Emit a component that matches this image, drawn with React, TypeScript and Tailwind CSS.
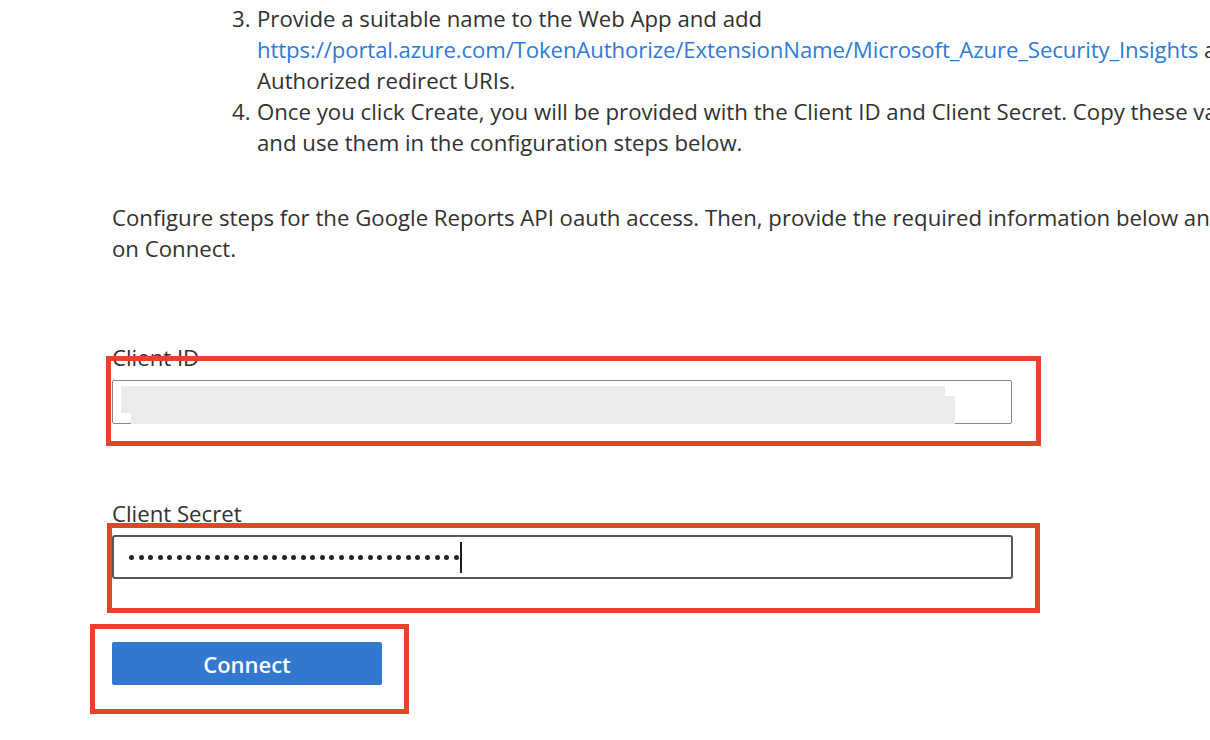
import React from "react";

const font = { fontFamily: '"Open Sans", "Noto Sans", sans-serif' };

function RedBox({ className }: { className: string }) {
  return <div className={"pointer-events-none absolute border-[5px] border-[#e6432a] " + className} />;
}

export default function App() {
  const dots = Array.from({ length: 35 });

  return (
    <div
      className="relative w-[1210px] h-[740px] overflow-hidden bg-white text-[22.2px] leading-[31px] text-[#323130]"
      style={font}
    >
      <div className="pl-[112px] w-[1500px]">
        {/* Steps list */}
        <div className="mt-[3px] pl-[120px] whitespace-nowrap">
          <div className="flex">
            <span className="w-[25px] shrink-0">3.</span>
            <div>
              <div>Provide a suitable name to the Web App and add</div>
              <div>
                <span className="text-[#2f7bd6] tracking-[-0.12px]">
                  https://portal.azure.com/TokenAuthorize/ExtensionName/Microsoft_Azure_Security_Insights
                </span>{" "}
                as the
              </div>
              <div>Authorized redirect URIs.</div>
            </div>
          </div>
          <div className="flex">
            <span className="w-[25px] shrink-0">4.</span>
            <div>
              <div>Once you click Create, you will be provided with the Client ID and Client Secret. Copy these values</div>
              <div>and use them in the configuration steps below.</div>
            </div>
          </div>
        </div>

        {/* Intro paragraph */}
        <div className="mt-[44px] whitespace-nowrap">
          <div>Configure steps for the Google Reports API oauth access. Then, provide the required information below and click</div>
          <div>on Connect.</div>
        </div>

        {/* Client ID */}
        <div className="mt-[78px]">Client ID</div>
        <div className="relative mt-[7px] w-[900px] h-[44px] rounded-[2px] border border-[#8a8886]">
          <div className="absolute left-[8px] top-[5px] w-[824px] h-[27px] bg-[#ebebeb]" />
          <div className="absolute left-[18px] top-[15px] w-[824px] h-[28px] bg-[#ebebeb]" />
          <RedBox className="-left-[7px] -top-[25px] w-[935px] h-[90px]" />
        </div>

        {/* Client Secret */}
        <div className="mt-[74px]">Client Secret</div>
        <div className="relative mt-[6px] w-[901px] h-[44px] rounded-[3px] border-2 border-[#575757] flex items-center pl-[15px]">
          <div className="flex items-center gap-[4.55px]">
            {dots.map((_, i) => (
              <div key={i} className="w-[5px] h-[5px] rounded-full bg-[#252423]" />
            ))}
          </div>
          <div className="ml-[1px] w-[2px] h-[31px] bg-[#1b1a19]" />
          <RedBox className="-left-[7px] -top-[14px] w-[933px] h-[90px]" />
        </div>

        {/* Connect */}
        <div className="relative mt-[63px] w-[270px]">
          <button className="w-[270px] h-[43px] pt-[2px] rounded-[2px] bg-[#3378d0] text-white font-semibold text-[22px] leading-[31px]">
            Connect
          </button>
          <RedBox className="-left-[22px] -top-[18px] w-[319px] h-[90px]" />
        </div>
      </div>
    </div>
  );
}
